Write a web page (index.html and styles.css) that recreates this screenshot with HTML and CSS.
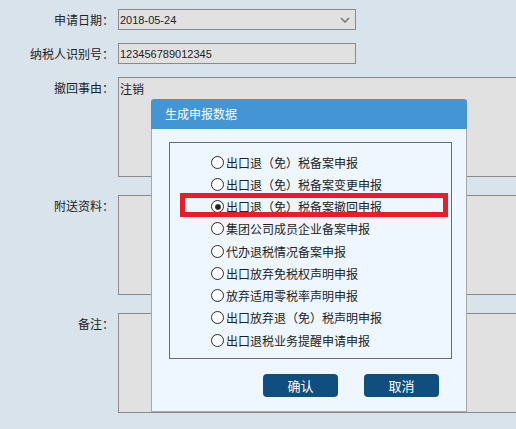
FILE: index.html
```html
<!DOCTYPE html>
<html lang="zh-CN">
<head>
    <meta charset="UTF-8">
    <title>撤回申报</title>
    <link rel="stylesheet" href="styles.css">
</head>
<body>
    <div class="form">
        <div class="row">
            <label class="label">申请日期：</label>
            <div class="field select">
                <span class="value">2018-05-24</span>
                <svg class="arrow" width="10" height="6" viewBox="0 0 10 6"><path d="M1 1 L5 5 L9 1" fill="none" stroke="#7a7a7a" stroke-width="1.6"/></svg>
            </div>
        </div>
        <div class="row">
            <label class="label">纳税人识别号：</label>
            <div class="field input"><span class="value">123456789012345</span></div>
        </div>
        <div class="row area-row">
            <label class="label">撤回事由：</label>
            <div class="field textarea">注销</div>
        </div>
        <div class="row area-row">
            <label class="label">附送资料：</label>
            <div class="field textarea"></div>
        </div>
        <div class="row area-row">
            <label class="label">备注：</label>
            <div class="field textarea"></div>
        </div>
        <div class="row">
            <label class="label"></label>
            <div class="field input"></div>
        </div>
    </div>

    <div class="dialog">
        <div class="dialog-title">生成申报数据</div>
        <div class="dialog-body">
            <div class="options">
                <div class="option"><span class="radio"></span>出口退（免）税备案申报</div>
                <div class="option"><span class="radio"></span>出口退（免）税备案变更申报</div>
                <div class="option"><span class="radio checked"></span>出口退（免）税备案撤回申报</div>
                <div class="option"><span class="radio"></span>集团公司成员企业备案申报</div>
                <div class="option"><span class="radio"></span>代办退税情况备案申报</div>
                <div class="option"><span class="radio"></span>出口放弃免税权声明申报</div>
                <div class="option"><span class="radio"></span>放弃适用零税率声明申报</div>
                <div class="option"><span class="radio"></span>出口放弃退（免）税声明申报</div>
                <div class="option"><span class="radio"></span>出口退税业务提醒申请申报</div>
                <div class="highlight"></div>
            </div>
            <div class="actions">
                <button class="btn">确认</button>
                <button class="btn">取消</button>
            </div>
        </div>
    </div>
</body>
</html>
```
FILE: styles.css
```css
body {
    margin: 0;
    background: #d9e3ec;
    color: #222;
    font-family: "Noto Sans CJK SC", sans-serif;
    font-size: 12px;
    overflow: hidden;
    height: 429px;
    position: relative;
}
.form {
    padding-top: 9px;
}
.row {
    display: flex;
    align-items: center;
    margin-bottom: 13px;
}
.row.area-row {
    align-items: flex-start;
    margin-bottom: 18px;
}
.label {
    width: 114px;
    flex-shrink: 0;
    margin-right: 4px;
    text-align: right;
    line-height: 18px;
    white-space: nowrap;
}
.area-row .label {
    padding-top: 2px;
}
.field {
    box-sizing: border-box;
    background: #e1e1e1;
    border: 1px solid #8a8a8a;
}
.select, .input {
    width: 238px;
    height: 21px;
    display: flex;
    align-items: center;
    padding-left: 1px;
    font-family: "Liberation Sans", sans-serif;
    font-size: 11px;
}
.select {
    justify-content: space-between;
    padding-right: 5px;
}
.textarea {
    width: 420px;
    height: 100px;
    flex-shrink: 0;
    padding: 2px 1px;
    line-height: 18px;
}
.dialog {
    position: absolute;
    left: 151px;
    top: 99px;
    width: 316px;
}
.dialog-title {
    height: 30px;
    line-height: 30px;
    padding-left: 14px;
    background: #4396d3;
    color: #fff;
    border-radius: 3px 3px 0 0;
}
.dialog-body {
    box-sizing: border-box;
    height: 283px;
    background: #eef6ff;
    border: 1px solid #a8a8a8;
    border-top: none;
    padding: 13px 0 0 17px;
}
.options {
    position: relative;
    box-sizing: border-box;
    width: 283px;
    height: 217px;
    border: 1px solid #6b6b6b;
    padding: 8px 0 0 41px;
}
.option {
    display: flex;
    align-items: center;
    height: 22.25px;
    white-space: nowrap;
}
.radio {
    box-sizing: border-box;
    width: 13px;
    height: 13px;
    margin-right: 2px;
    border: 1px solid #2a2a2a;
    border-radius: 50%;
    background: #fff;
    display: flex;
    align-items: center;
    justify-content: center;
}
.radio.checked::after {
    content: "";
    width: 6px;
    height: 6px;
    border-radius: 50%;
    background: radial-gradient(circle, #222 40%, #777 100%);
}
.highlight {
    position: absolute;
    left: 10px;
    top: 50px;
    width: 268px;
    height: 24px;
    box-sizing: border-box;
    border: 5px solid #ec1c24;
}
.actions {
    display: flex;
    gap: 26px;
    padding: 15px 0 0 94px;
}
.btn {
    width: 75px;
    height: 23px;
    border: none;
    border-radius: 4px;
    background: #0f4e7e;
    color: #fff;
    font-family: "Noto Sans CJK SC", sans-serif;
    font-size: 13px;
    padding: 0;
}
```
